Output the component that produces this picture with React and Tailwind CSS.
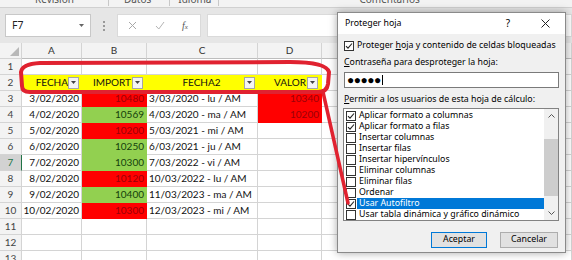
import React from 'react';

const data = [
  { n: 3, a: '3/02/2020', b: '10480', bc: 'r', c: '3/03/2020 - lu / AM', d: '10340' },
  { n: 4, a: '4/02/2020', b: '10569', bc: 'g', c: '4/03/2020 - ma / AM', d: '10200' },
  { n: 5, a: '5/02/2020', b: '10200', bc: 'r', c: '5/03/2021 - mi / AM' },
  { n: 6, a: '6/02/2020', b: '10250', bc: 'g', c: '6/03/2021 - ju / AM' },
  { n: 7, a: '7/02/2020', b: '10300', bc: 'g', c: '7/03/2022 - vi / AM' },
  { n: 8, a: '8/02/2020', b: '10120', bc: 'r', c: '10/03/2022 - lu / AM' },
  { n: 9, a: '9/02/2020', b: '10400', bc: 'g', c: '11/03/2023 - ma / AM' },
  { n: 10, a: '10/02/2020', b: '10300', bc: 'r', c: '12/03/2023 - mi / AM' },
  { n: 11 },
  { n: 12 },
  { n: 13 },
];

const perms = [
  { label: 'Aplicar formato a columnas', on: true },
  { label: 'Aplicar formato a filas', on: true },
  { label: 'Insertar columnas' },
  { label: 'Insertar filas' },
  { label: 'Insertar hipervínculos' },
  { label: 'Eliminar columnas' },
  { label: 'Eliminar filas' },
  { label: 'Ordenar' },
  { label: 'Usar Autofiltro', on: true, sel: true },
  { label: 'Usar tabla dinámica y gráfico dinámico' },
];

const cell = 'h-4 border-r border-b flex items-center overflow-hidden whitespace-nowrap';
const grid = 'border-[#d4d4d4]';
const redFill = 'bg-[#ff0000] border-[#ff0000] text-[#9a0008]';
const greenFill = 'bg-[#92d050] border-[#92d050] text-[#14400c]';
const yellow = 'bg-[#ffff00] border-[#ffff00]';

function Check({ on }) {
  return (
    <span className="w-[10px] h-[10px] shrink-0 bg-white border border-[#333] flex items-center justify-center">
      {on && (
        <svg width="8" height="8" viewBox="0 0 8 8">
          <path d="M1 4.2 L3 6.2 L7 1.5" fill="none" stroke="#222" strokeWidth="1.1" />
        </svg>
      )}
    </span>
  );
}

function FilterBtn() {
  return (
    <span className="w-[11px] h-[12px] shrink-0 bg-[#f4f4f4] border border-[#a6a6a6] flex items-center justify-center">
      <svg width="5" height="3" viewBox="0 0 5 3">
        <path d="M0 0 L5 0 L2.5 3 Z" fill="#444" />
      </svg>
    </span>
  );
}

function RowHead({ n }) {
  const active = n === 7;
  return (
    <div
      className={`${cell} ${grid} justify-center ${
        active ? 'bg-[#d2d2d2] text-[#217346] border-r-[#217346]' : 'bg-[#f3f3f3] text-[#444]'
      }`}
    >
      {n}
    </div>
  );
}

export default function App() {
  return (
    <div className="relative w-[572px] h-[260px] overflow-hidden bg-white font-['Noto_Sans',sans-serif]">
      {/* ribbon bottom */}
      <div className="h-[8px] bg-[#f3f3f3] border-b border-[#d0d0d0] flex text-[10px] text-[#555] leading-[12px] overflow-hidden">
        <span className="ml-[35px] -mt-[7px]">Revisión</span>
        <span className="ml-[34px] w-px h-[6px] bg-[#c8c8c8]" />
        <span className="ml-[15px] -mt-[7px]">Datos</span>
        <span className="ml-[18px] w-px h-[6px] bg-[#c8c8c8]" />
        <span className="ml-[8px] -mt-[7px]">Idioma</span>
        <span className="ml-[7px] w-px h-[6px] bg-[#c8c8c8]" />
        <span className="ml-[140px] -mt-[7px]">Comentarios</span>
      </div>

      {/* formula bar */}
      <div className="h-[35px] bg-[#e6e6e6] flex items-center">
        <div className="ml-[5px] w-[86px] h-[23px] bg-white border border-[#c8c8c8] flex items-center justify-between px-[6px] text-[10.5px] text-[#222]">
          <span>F7</span>
          <svg width="5" height="3" viewBox="0 0 5 3">
            <path d="M0 0 L5 0 L2.5 3 Z" fill="#666" />
          </svg>
        </div>
        <div className="w-[26px] flex flex-col items-center gap-[2px]">
          <span className="w-[2px] h-[2px] bg-[#999]" />
          <span className="w-[2px] h-[2px] bg-[#999]" />
          <span className="w-[2px] h-[2px] bg-[#999]" />
        </div>
        <div className="w-[84px] h-[23px] bg-white border border-[#dadada] flex items-center">
          <svg className="ml-[10px]" width="9" height="9" viewBox="0 0 9 9">
            <path d="M1 1 L8 8 M8 1 L1 8" stroke="#a8a8a8" strokeWidth="1" />
          </svg>
          <svg className="ml-[18px]" width="10" height="9" viewBox="0 0 10 9">
            <path d="M1 5 L3.8 8 L9 1" fill="none" stroke="#b4b4b4" strokeWidth="1" />
          </svg>
          <span className="ml-[17px] text-[10px] italic font-['Liberation_Serif',serif] text-[#555]">
            f<span className="text-[7px]">x</span>
          </span>
        </div>
        <div className="ml-[6px] flex-1 h-[23px] bg-white border border-[#dadada]" />
      </div>

      {/* sheet */}
      <div className="grid grid-cols-[22px_60px_65px_111px_64px_1fr] font-['Lato',sans-serif] text-[10px] text-[#111]">
        <div className={`${cell} ${grid} bg-[#f3f3f3] items-end justify-end pr-[2px] pb-[2px]`}>
          <svg width="9" height="9" viewBox="0 0 9 9">
            <path d="M9 0 L9 9 L0 9 Z" fill="#b8b8b8" />
          </svg>
        </div>
        {['A', 'B', 'C', 'D', 'E'].map((l) => (
          <div key={l} className={`${cell} ${grid} bg-[#f3f3f3] border-b-[#bdbdbd] justify-center text-[#333]`}>
            {l}
          </div>
        ))}

        <RowHead n={1} />
        <div className={`${cell} ${grid}`} />
        <div className={`${cell} ${grid}`} />
        <div className={`${cell} ${grid}`} />
        <div className={`${cell} ${grid}`} />
        <div className={`${cell} ${grid}`} />

        <RowHead n={2} />
        <div className={`${cell} ${yellow} pr-[2px]`}>
          <span className="flex-1 text-right">FECHA</span>
          <FilterBtn />
        </div>
        <div className={`${cell} ${yellow} pr-[3px]`}>
          <span className="flex-1 text-right pr-px">IMPORT</span>
          <FilterBtn />
        </div>
        <div className={`${cell} ${yellow} pr-[2px]`}>
          <span className="flex-1 text-center pl-[12px]">FECHA2</span>
          <FilterBtn />
        </div>
        <div className={`${cell} ${yellow} pr-[3px]`}>
          <span className="flex-1 text-right pr-px">VALOR</span>
          <FilterBtn />
        </div>
        <div className={`${cell} ${grid}`} />

        {data.map((r) => (
          <React.Fragment key={r.n}>
            <RowHead n={r.n} />
            <div className={`${cell} ${grid} justify-end pr-[2px]`}>{r.a}</div>
            <div
              className={`${cell} justify-end pr-[2px] ${
                r.bc === 'r' ? redFill : r.bc === 'g' ? greenFill : grid
              }`}
            >
              {r.b}
            </div>
            <div className={`${cell} ${grid} pl-[2px]`}>{r.c}</div>
            <div className={`${cell} justify-end pr-[2px] ${r.d ? redFill : grid}`}>{r.d}</div>
            <div className={`${cell} ${grid}`} />
          </React.Fragment>
        ))}
      </div>

      {/* dialog */}
      <div className="absolute left-[337px] top-[12px] w-[229px] h-[241px] border border-[#8a8a8a] bg-[#f0f0f0] shadow-[0_0_8px_rgba(0,0,0,0.35)] flex flex-col text-[8.8px] text-black">
        <div className="h-[21px] bg-white flex items-center pl-[7px]">
          <span className="flex-1">Proteger hoja</span>
          <span className="text-[10px] mr-[31px]">?</span>
          <svg className="mr-[15px]" width="9" height="9" viewBox="0 0 9 9">
            <path d="M0.5 0.5 L8.5 8.5 M8.5 0.5 L0.5 8.5" stroke="#222" strokeWidth="1" />
          </svg>
        </div>
        <div className="px-[6px] flex flex-col">
          <div className="mt-[6px] h-[11px] flex items-center gap-[3px]">
            <Check on />
            <span className="whitespace-nowrap">
              Proteger <span className="underline">h</span>oja y contenido de celdas bloqueadas
            </span>
          </div>
          <div className="mt-[6px] h-[12px] flex items-center">
            <span>
              <span className="underline">C</span>ontraseña para desproteger la hoja:
            </span>
          </div>
          <div className="mt-[3px] h-[16px] bg-white border border-[#7a7a7a] flex items-center pl-[2px]">
            <span className="text-[12px] leading-none tracking-[-0.5px]">●●●●●</span>
            <span className="ml-px w-px h-[10px] bg-black" />
          </div>
          <div className="mt-[6px] h-[12px] flex items-center">
            <span>
              <span className="underline">P</span>ermitir a los usuarios de esta hoja de cálculo:
            </span>
          </div>
          <div className="mt-[2px] -ml-px h-[113px] bg-white border border-[#828282] flex">
            <div className="flex-1 flex flex-col pt-px">
              {perms.map((p) => (
                <div key={p.label} className="h-[11px] flex items-center pl-[2px]">
                  <Check on={p.on} />
                  <span
                    className={`ml-px flex-1 h-full flex items-center pl-[2px] whitespace-nowrap ${
                      p.sel ? 'bg-[#0078d7] text-white' : ''
                    }`}
                  >
                    {p.label}
                  </span>
                </div>
              ))}
            </div>
            <div className="w-[14px] bg-[#f0f0f0] flex flex-col items-center">
              <div className="h-[14px] flex items-center justify-center">
                <svg width="7" height="4" viewBox="0 0 7 4">
                  <path d="M0.5 3.5 L3.5 0.5 L6.5 3.5" fill="none" stroke="#555" strokeWidth="1" />
                </svg>
              </div>
              <div className="h-[16px]" />
              <div className="w-full h-[57px] bg-[#cdcdcd]" />
              <div className="flex-1" />
              <div className="h-[14px] flex items-center justify-center">
                <svg width="7" height="4" viewBox="0 0 7 4">
                  <path d="M0.5 0.5 L3.5 3.5 L6.5 0.5" fill="none" stroke="#555" strokeWidth="1" />
                </svg>
              </div>
            </div>
          </div>
          <div className="mt-[11px] flex justify-end gap-[13px] pr-px">
            <div className="w-[56px] h-[16px] bg-[#e1e1e1] border border-[#0078d7] flex items-center justify-center">
              Aceptar
            </div>
            <div className="w-[58px] h-[16px] bg-[#e1e1e1] border border-[#adadad] flex items-center justify-center">
              Cancelar
            </div>
          </div>
        </div>
      </div>

      {/* red annotation */}
      <svg className="absolute inset-0 pointer-events-none" width="572" height="260" viewBox="0 0 572 260">
        <path
          d="M22 86 L21 72 Q22 64 40 63 L290 62 Q326 62 329 72 L328 84 Q327 92 318 92 L30 92 Q22 92 22 86 Z"
          fill="none"
          stroke="#e02230"
          strokeWidth="4"
          strokeLinejoin="round"
        />
        <path d="M323 92 L348 203" stroke="#e02230" strokeWidth="3.5" strokeLinecap="round" />
      </svg>
    </div>
  );
}
